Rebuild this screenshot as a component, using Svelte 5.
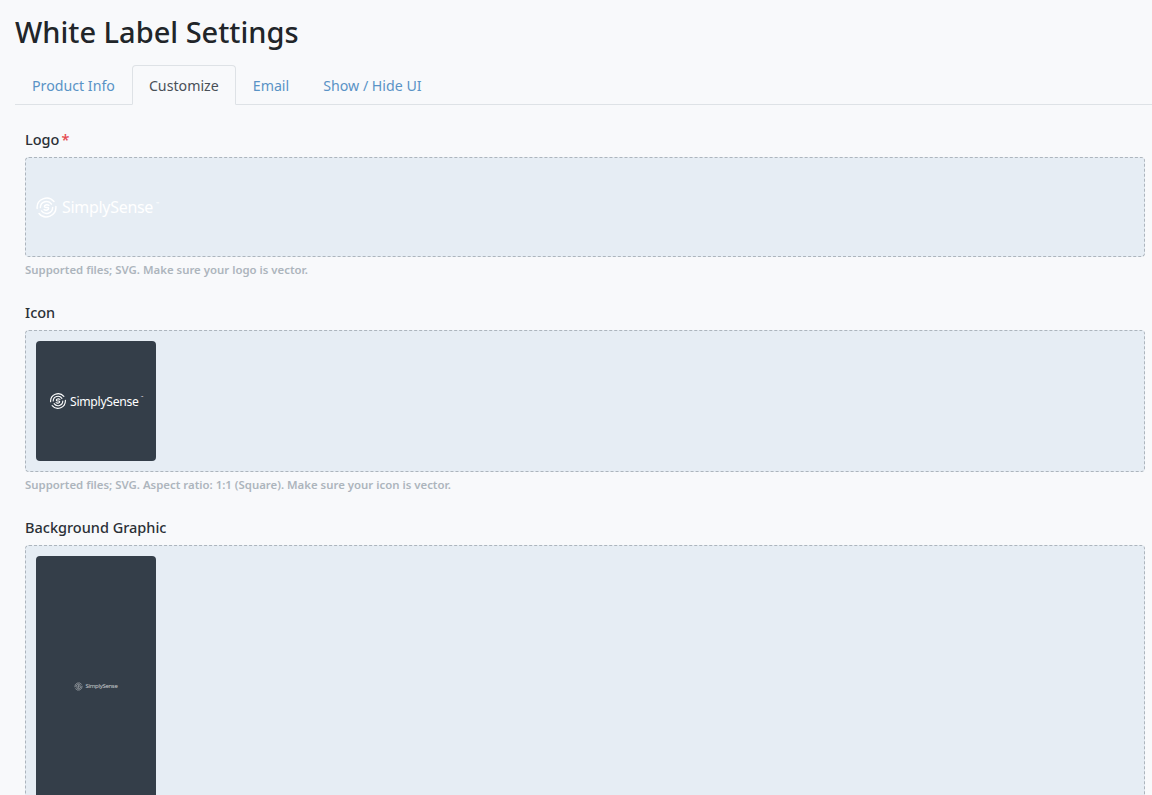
<script>
  const tabs = ["Product Info", "Customize", "Email", "Show / Hide UI"];
  let active = $state("Customize");
</script>

{#snippet mark()}
  <svg class="mark" viewBox="0 0 24 24" fill="none" stroke="currentColor" stroke-width="1.5" stroke-linecap="round">
    <path d="M2.2 13A10 10 0 0 1 19.8 5.8" />
    <path d="M21.8 11A10 10 0 0 1 4.2 18.2" />
    <path d="M5.6 12A6.4 6.4 0 0 1 17.2 8.4" />
    <path d="M18.4 12A6.4 6.4 0 0 1 6.8 15.6" />
    <path d="M14.5 9.8C12.5 8.5 9.5 9.5 9.8 11.2C10 13 14.2 11 14.3 12.8C14.4 14.5 11.5 15.5 9.5 14.2" />
  </svg>
{/snippet}

{#snippet brand()}
  <span class="brand">{@render mark()}<span class="name">SimplySense</span><span class="tm">™</span></span>
{/snippet}

<div class="page">
  <h1>White Label Settings</h1>

  <ul class="tabs">
    {#each tabs as tab}
      <li>
        <button class:active={tab === active} onclick={() => (active = tab)}>{tab}</button>
      </li>
    {/each}
  </ul>

  <div class="panel">
    <section class="field">
      <div class="label">Logo<span class="req">*</span></div>
      <div class="drop">
        <div class="thumb logo">{@render brand()}</div>
      </div>
      <p class="hint">Supported files; SVG. Make sure your logo is vector.</p>
    </section>

    <section class="field">
      <div class="label">Icon</div>
      <div class="drop">
        <div class="thumb icon">{@render brand()}</div>
      </div>
      <p class="hint">Supported files; SVG. Aspect ratio: 1:1 (Square). Make sure your icon is vector.</p>
    </section>

    <section class="field">
      <div class="label">Background Graphic</div>
      <div class="drop">
        <div class="thumb bg">{@render brand()}</div>
      </div>
    </section>
  </div>
</div>

<style>
  :global(body) {
    background: #f8f9fb;
    font-family: "Noto Sans", "Open Sans", sans-serif;
    color: #212529;
  }

  .page {
    height: 795px;
    overflow: hidden;
    padding-left: 15px;
    box-sizing: border-box;
  }

  h1 {
    margin: 0;
    padding-top: 12px;
    font-size: 29px;
    line-height: 40px;
    font-weight: 500;
    color: #212529;
  }

  .tabs {
    display: flex;
    list-style: none;
    margin: 13px 0 0;
    padding: 0;
    border-bottom: 1px solid #dee2e6;
  }

  .tabs li {
    margin-bottom: -1px;
  }

  .tabs button {
    display: block;
    height: 40px;
    padding: 0 16px;
    font: inherit;
    font-size: 14.2px;
    color: #5a93c6;
    background: none;
    border: 1px solid transparent;
    border-radius: 4px 4px 0 0;
    cursor: pointer;
  }

  .tabs button.active {
    color: #495057;
    background: #f8f9fb;
    border-color: #dee2e6 #dee2e6 #f8f9fb;
  }

  .panel {
    padding: 25px 7px 0 10px;
  }

  .field {
    margin-bottom: 25px;
  }

  .label {
    font-size: 14.5px;
    line-height: 18px;
    font-weight: 500;
    color: #2b3036;
    margin-bottom: 9px;
  }

  .req {
    color: #e5484d;
    margin-left: 2px;
  }

  .drop {
    padding: 10px;
    background: #e6edf4;
    border: 1px dashed #adb5bd;
    border-radius: 4px;
  }

  .thumb {
    display: flex;
    align-items: center;
    justify-content: center;
    width: 120px;
    border-radius: 4px;
    color: #fff;
  }

  .thumb.logo {
    height: 78px;
    justify-content: flex-start;
  }

  .thumb.icon {
    height: 120px;
    background: #343e49;
  }

  .thumb.bg {
    height: 260px;
    background: #343e49;
  }

  .brand {
    display: inline-flex;
    align-items: center;
  }

  .mark {
    flex: none;
  }

  .name {
    font-weight: 400;
    letter-spacing: -0.3px;
  }

  .tm {
    align-self: flex-start;
    line-height: 1;
    margin-left: -1px;
  }

  .logo .brand {
    font-size: 16px;
    gap: 4px;
  }

  .logo .mark {
    width: 23px;
    height: 23px;
    margin-left: -1px;
  }

  .logo .tm {
    font-size: 4px;
    margin-top: 6px;
  }

  .icon .brand {
    font-size: 12.2px;
    gap: 3px;
  }

  .icon .mark {
    width: 18px;
    height: 18px;
  }

  .icon .tm {
    font-size: 3px;
    margin-top: 4px;
  }

  .bg .brand {
    font-size: 6px;
    gap: 2px;
    opacity: 0.7;
  }

  .bg .mark {
    width: 9px;
    height: 9px;
  }

  .bg .tm {
    display: none;
  }

  .hint {
    margin: 4px 0 0;
    font-size: 11.4px;
    line-height: 17px;
    font-weight: 600;
    color: #adb5bd;
  }
</style>
